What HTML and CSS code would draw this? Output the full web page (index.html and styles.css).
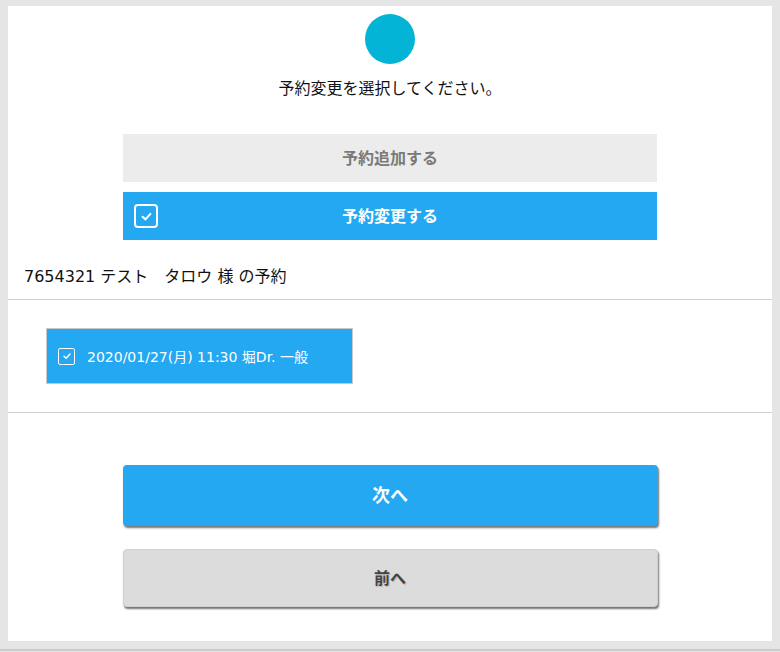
FILE: index.html
```html
<!DOCTYPE html>
<html lang="ja">
<head>
<meta charset="utf-8">
<title>予約変更</title>
<link rel="stylesheet" href="styles.css">
</head>
<body>
<div class="panel">
  <div class="logo"></div>
  <p class="heading">予約変更を選択してください。</p>
  <div class="choices">
    <div class="choice choice-off">予約追加する</div>
    <div class="choice choice-on">
      <span class="check check-lg">
        <svg viewBox="0 0 10 10" width="13" height="13"><path d="M2 5.2 L4.2 7.2 L8 3" fill="none" stroke="#fff" stroke-width="1.6" stroke-linecap="round" stroke-linejoin="round"/></svg>
      </span>
      予約変更する
    </div>
  </div>
  <div class="patient">7654321 テスト　タロウ 様 の予約</div>
  <div class="appts">
    <div class="appt">
      <span class="check check-sm">
        <svg viewBox="0 0 10 10" width="10" height="10"><path d="M2 5.2 L4.2 7.2 L8 3" fill="none" stroke="#fff" stroke-width="1.5" stroke-linecap="round" stroke-linejoin="round"/></svg>
      </span>
      <span class="appt-text">2020/01/27(月) 11:30 堀Dr. 一般</span>
    </div>
  </div>
  <div class="nav">
    <div class="btn btn-next">次へ</div>
    <div class="btn btn-prev">前へ</div>
  </div>
</div>
<div class="foot"></div>
</body>
</html>
```
FILE: styles.css
```css
html, body {
  margin: 0;
  padding: 0;
}
body {
  background: #e5e5e5;
  font-family: "Noto Sans CJK JP", "Noto Sans", sans-serif;
  color: #111;
  width: 780px;
  height: 652px;
  overflow: hidden;
}
.panel {
  margin: 6px 8px 0;
  height: 635px;
  background: #fff;
  display: flex;
  flex-direction: column;
}
.logo {
  width: 50px;
  height: 50px;
  border-radius: 50%;
  background: #03b4d7;
  margin: 8px auto 0;
}
.heading {
  margin: 13px 0 0;
  text-align: center;
  font-size: 16px;
  line-height: 20px;
}
.choices {
  width: 534px;
  margin: 37px auto 0;
  display: flex;
  flex-direction: column;
  gap: 10px;
}
.choice {
  position: relative;
  box-sizing: border-box;
  height: 48px;
  padding-bottom: 3px;
  display: flex;
  align-items: center;
  justify-content: center;
  font-size: 16px;
  font-weight: bold;
}
.choice-off {
  background: #ececec;
  color: #7a7a7a;
}
.choice-on {
  background: #23a8f1;
  color: #fff;
}
.check {
  display: flex;
  align-items: center;
  justify-content: center;
  box-sizing: border-box;
  border: 2px solid #fff;
}
.check-lg {
  position: absolute;
  left: 11px;
  top: 12px;
  width: 24px;
  height: 24px;
  border-radius: 4px;
}
.patient {
  padding: 26px 16px 12px;
  font-family: "DejaVu Sans", "Noto Sans CJK JP", sans-serif;
  font-size: 16px;
  line-height: 21px;
  border-bottom: 1px solid #cfcfcf;
}
.appts {
  padding: 28px 38px;
  border-bottom: 1px solid #cfcfcf;
}
.appt {
  box-sizing: border-box;
  width: 307px;
  height: 56px;
  background: #23a8f1;
  border: 1px solid #c8c8c8;
  display: flex;
  align-items: center;
  padding-left: 11px;
  gap: 12px;
  color: #fff;
}
.check-sm {
  width: 17px;
  height: 17px;
  border-width: 1.5px;
  border-radius: 2px;
}
.appt-text {
  font-family: "DejaVu Sans", "Noto Sans CJK JP", sans-serif;
  font-size: 14px;
}
.nav {
  width: 535px;
  margin: 52px auto 0;
  display: flex;
  flex-direction: column;
  gap: 23px;
}
.btn {
  box-sizing: border-box;
  display: flex;
  align-items: center;
  justify-content: center;
  border-radius: 4px;
  font-weight: bold;
  padding-bottom: 3px;
  box-shadow: 1px 2px 2px rgba(0, 0, 0, 0.55);
}
.btn-next {
  height: 61px;
  background: #23a8f1;
  color: #fff;
  font-size: 18px;
}
.btn-prev {
  height: 58px;
  background: #dcdcdc;
  color: #444;
  font-size: 16px;
  text-shadow: 1px 1px 1px rgba(0,0,0,0.2);
  border: 1px solid #d0d0d0;
}
.foot {
  height: 8px;
  border-bottom: 2px solid #cbcbcb;
}
```
